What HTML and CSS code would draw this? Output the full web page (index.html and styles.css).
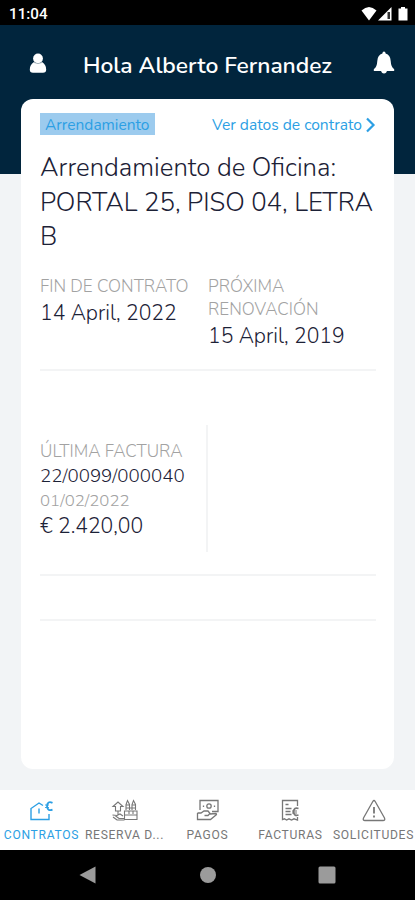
FILE: index.html
```html
<!DOCTYPE html>
<html lang="es">
<head>
<meta charset="utf-8">
<meta name="viewport" content="width=device-width, initial-scale=1">
<title>Contratos</title>
<link rel="stylesheet" href="styles.css">
</head>
<body>
<div class="status">
  <span class="clock">11:04</span>
  <svg class="status-icons" width="48" height="16" viewBox="0 0 48 16" fill="#fff">
    <path d="M0.500 4.500Q8 -2.500 15.500 4.500L8 14.500Z"/>
    <path d="M17 14.500L30.500 1V14.500Z"/>
    <path d="M26.500 6h2.500v7h-2.500Z" fill="#333"/>
    <path d="M37.500 2.500h2.500V1h4v1.500h2.500v12h-9Z"/>
  </svg>
</div>
<header class="header">
  <svg class="user" width="18" height="22" viewBox="0 0 18 22" fill="#fff"><circle cx="9" cy="5.500" r="4.900"/><path d="M5 9Q9 11.500 13 9Q17.200 11.500 17.200 16.500Q17.200 19.800 14 19.800H4Q0.800 19.800 0.800 16.500Q0.800 11.500 5 9Z"/><path d="M5 9.500Q9 11.800 13 9.500" fill="none" stroke="#8fa0ab" stroke-width="0.700"/></svg>
  <h1 class="title">Hola Alberto Fernandez</h1>
  <svg class="bell" width="22" height="24" viewBox="0 0 22 24" fill="#fff"><path d="M11 0.500Q12.500 0.500 12.600 2.500Q17.500 4 17.700 10Q18 16 21 18Q22 20 20 20H2Q0 20 1 18Q4 16 4.300 10Q4.500 4 9.400 2.500Q9.500 0.500 11 0.500Z"/><path d="M8 19.500h6Q13.500 22.500 11 22.500T8 19.500Z"/></svg>
</header>
<main class="content">
  <section class="card">
    <div class="card-top">
      <span class="tag">Arrendamiento</span>
      <a class="link"><span class="link-text">Ver datos de contrato</span><svg width="10" height="16" viewBox="0 0 10 16" fill="none" stroke="#2c9fe4" stroke-width="2.200"><path d="M1 1.500L7.500 8L1 14.500"/></svg></a>
    </div>
    <h2 class="name">Arrendamiento de Oficina:<br>PORTAL 25, PISO 04, LETRA<br>B</h2>
    <div class="dates">
      <div><div class="label">FIN DE CONTRATO</div><div class="value">14 April, 2022</div></div>
      <div><div class="label">PRÓXIMA<br>RENOVACIÓN</div><div class="value">15 April, 2019</div></div>
    </div>
    <div class="invoice">
      <div class="invoice-data">
        <div class="label">ÚLTIMA FACTURA</div>
        <div class="number">22/0099/000040</div>
        <div class="day">01/02/2022</div>
        <div class="amount">€ 2.420,00</div>
      </div>
    </div>
    <div class="blank"></div>
  </section>
</main>
<nav class="tabs">
  <a class="tab active">
    <svg width="26" height="24" viewBox="0 0 26 24" fill="none" stroke="currentColor" stroke-width="1.400"><path d="M14 6.500L10 4L2 9.500V20.500H20V15M10 9.500v5"/><path d="M23.500 3.800Q18.500 1.500 18 7Q18.500 12.500 23.500 10.700" stroke-width="1.900"/><path d="M16 6h4M16 8.500h4" stroke-width="0.900"/></svg>
    <span class="tab-text">CONTRATOS</span>
  </a>
  <a class="tab">
    <svg width="28" height="24" viewBox="0 0 28 24" fill="none" stroke="currentColor" stroke-width="1.100"><path d="M2 7.500L7 3L12 7.500H9.500V12H4.500V7.500ZM7 12v4M15 11V5.500l1.500-4l2 4v5.500M21 11V5.500l1.500-4l2 4v5.500M14.500 6h4M21 6h4M15 9h10M13.500 12h12.500v8.500H13.500ZM18 12v3M22 12v3M13.500 16h12.500M1.500 16l4.500 0.500l3-1.500l3 2M2 18l4 3h7.500M4 16.500l4 3h5"/></svg>
    <span class="tab-text">RESERVA D...</span>
  </a>
  <a class="tab">
    <svg width="24" height="24" viewBox="0 0 24 24" fill="none" stroke="currentColor" stroke-width="1.300"><path d="M4 11V1.500H22V12.500H16"/><circle cx="13" cy="7" r="2.200"/><path d="M7.500 6.500v1.500M18.500 6.500v1.500M1.500 14H5L8 12H12L14 14.500L12 16.500H8.500M14 15L20 14.500Q21 15 20 16L14.500 20.500H1.500V14"/></svg>
    <span class="tab-text">PAGOS</span>
  </a>
  <a class="tab">
    <svg width="20" height="24" viewBox="0 0 20 24" fill="none" stroke="currentColor" stroke-width="1.300"><path d="M16.500 7V1.500H1.500V20.500L3.500 19.800L5.500 21L8 19.800L10.500 21L13 19.800L16.500 21V18M4.500 5.500h3M4.500 9.500h6M4.500 12.500h5M4.500 15.500h6"/><path d="M17.500 9.500Q13 8 12.500 12.800Q13 17.500 17.500 16" stroke-width="1.700"/><path d="M11 12h5M11 14h5" stroke-width="1"/></svg>
    <span class="tab-text">FACTURAS</span>
  </a>
  <a class="tab">
    <svg width="26" height="24" viewBox="0 0 26 24" fill="none" stroke="currentColor" stroke-width="1.300"><path d="M11.800 2.500Q13 0.500 14.200 2.500L23.500 19Q24.500 21.500 22 21.500H4Q1.500 21.500 2.500 19Z"/><path d="M13 8v6.500M13 16.500v2" stroke-width="1.800"/></svg>
    <span class="tab-text">SOLICITUDES</span>
  </a>
</nav>
<div class="system">
  <svg width="18" height="18" viewBox="0 0 18 18" fill="#9b9b9b"><path d="M0.500 9L16.500 0.500V17.500Z"/></svg>
  <svg width="18" height="18" viewBox="0 0 18 18" fill="#9b9b9b"><circle cx="9" cy="9" r="8"/></svg>
  <svg width="18" height="18" viewBox="0 0 18 18" fill="#9b9b9b"><rect x="0.500" y="0.500" width="17" height="17" rx="1.500"/></svg>
</div>
</body>
</html>
```
FILE: styles.css
```css
* { box-sizing: border-box; }
body {
  margin: 0;
  width: 415px;
  height: 900px;
  display: flex;
  flex-direction: column;
  overflow: hidden;
  background: #f2f4f6;
  color: #1c2136;
  font-family: Nunito, Lato, sans-serif;
  font-weight: 300;
  white-space: nowrap;
}
svg { display: block; flex: none; }
.status {
  height: 25px;
  flex: none;
  display: flex;
  justify-content: space-between;
  align-items: center;
  padding: 2px 6px 0 9px;
  background: #000;
}
.clock {
  color: #fff;
  font: 500 15.2px/22px Roboto, sans-serif;
}
.header {
  height: 149px;
  flex: none;
  display: flex;
  align-items: flex-start;
  padding: 27px 20px 0 29px;
  background: #01253d;
  color: #fff;
}
.user { margin-top: 1px; }
.title {
  flex: 1;
  margin: 0;
  padding-left: 36px;
  font-size: 22.8px;
  line-height: 28px;
  font-weight: 600;
}
.bell { margin-top: -1px; }
.content {
  flex: 1;
  padding: 0 21px;
}
.card {
  height: 670px;
  margin-top: -75px;
  padding: 14px 18px 0 19px;
  border-radius: 12px;
  background: #fff;
}
.card-top {
  height: 22px;
  display: flex;
  justify-content: space-between;
  align-items: center;
}
.tag {
  width: 115px;
  height: 22px;
  padding-left: 5px;
  line-height: 23px;
  font-size: 15.5px;
  font-weight: 400;
  background: #9ccbee;
  color: #2c9fe4;
}
.link {
  display: flex;
  align-items: center;
  gap: 4px;
  padding-top: 2px;
  color: #2c9fe4;
  font-size: 15.6px;
  font-weight: 400;
}
.name {
  margin: 16px 0 0;
  font-size: 25.75px;
  line-height: 34.5px;
  font-weight: 300;
}
.dates {
  height: 96px;
  margin-top: 20.5px;
  display: grid;
  grid-template-columns: 168px 1fr;
  align-content: start;
  border-bottom: 2px solid #f3f4f5;
}
.label {
  color: #a2a2a2;
  font-size: 17.1px;
  line-height: 23px;
}
.value {
  font-size: 21.1px;
  line-height: 30px;
}
.invoice {
  height: 205px;
  padding: 54px 0 23px;
  border-bottom: 2px solid #f3f4f5;
}
.invoice-data {
  width: 168px;
  height: 127px;
  padding-top: 15px;
  border-right: 2px solid #f3f4f5;
}
.number { font-size: 18.7px; line-height: 27px; }
.day { font-size: 16.8px; line-height: 22px; color: #a2a2a2; }
.amount { font-size: 21.1px; line-height: 29px; }
.blank {
  height: 45px;
  border-bottom: 2px solid #f3f4f5;
}
.tabs {
  height: 60px;
  flex: none;
  display: grid;
  grid-template-columns: repeat(5, 83px);
  background: #fff;
}
.tab {
  display: flex;
  flex-direction: column;
  align-items: center;
  padding-top: 9px;
  color: #777;
  font: 400 12.1px/16px Roboto, sans-serif;
  letter-spacing: 0.7px;
}
.tab-text { margin-top: 4px; }
.active { color: #2c9fe4; }
.system {
  height: 50px;
  flex: none;
  display: flex;
  justify-content: space-between;
  align-items: center;
  padding: 0 79px;
  background: #000;
}
```
